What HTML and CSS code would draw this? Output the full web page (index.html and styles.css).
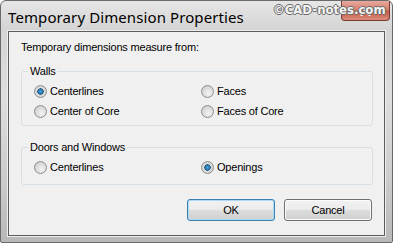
FILE: index.html
```html
<!DOCTYPE html>
<html lang="en">
<head>
    <meta charset="UTF-8">
    <title>Temporary Dimension Properties</title>
    <link rel="stylesheet" href="styles.css">
</head>
<body>
    <div class="window">
        <div class="titlebar">
            <span class="title">Temporary Dimension Properties</span>
            <span class="watermark">©CAD-notes.com</span>
            <span class="close">
                <svg width="11" height="10" viewBox="0 0 11 10">
                    <path d="M1.5 1 L9.5 9 M9.5 1 L1.5 9" stroke="#ffffff" stroke-width="2.2" stroke-linecap="round"/>
                </svg>
            </span>
        </div>

        <div class="client">
            <div class="intro">Temporary dimensions measure from:</div>

            <!-- Walls -->
            <fieldset class="group group-walls">
                <legend>Walls</legend>
                <div class="options">
                    <label class="option"><span class="radio checked"></span>Centerlines</label>
                    <label class="option"><span class="radio"></span>Faces</label>
                    <label class="option"><span class="radio"></span>Center of Core</label>
                    <label class="option"><span class="radio"></span>Faces of Core</label>
                </div>
            </fieldset>

            <!-- Doors and Windows -->
            <fieldset class="group group-doors">
                <legend>Doors and Windows</legend>
                <div class="options">
                    <label class="option"><span class="radio"></span>Centerlines</label>
                    <label class="option"><span class="radio checked"></span>Openings</label>
                </div>
            </fieldset>

            <div class="buttons">
                <button class="btn default">OK</button>
                <button class="btn">Cancel</button>
            </div>
        </div>
    </div>
</body>
</html>
```

FILE: styles.css
```css
html, body {
    margin: 0;
    padding: 0;
    background: #ffffff;
}

body {
    width: 393px;
    height: 243px;
    overflow: hidden;
    font-family: "Noto Sans", "Open Sans", sans-serif;
    color: #000;
}

.window {
    box-sizing: border-box;
    width: 393px;
    height: 243px;
    padding: 0 7px 7px 7px;
    border: 1px solid #6a6a6a;
    border-radius: 6px 6px 2px 2px;
    background: linear-gradient(180deg, #e6e6e6 0%, #d4d4d4 12%, #dedede 40%, #cbcbcb 75%, #b8b8b8 100%);
}

.titlebar {
    position: relative;
    height: 30px;
    display: flex;
    align-items: center;
    justify-content: space-between;
}

.title {
    font-size: 15px;
    margin-top: 1px;
    color: #000;
    letter-spacing: 0.1px;
}

.watermark {
    position: absolute;
    left: 265px;
    top: 1px;
    white-space: nowrap;
    font-family: "DejaVu Sans Condensed", "DejaVu Sans", sans-serif;
    font-weight: bold;
    font-size: 13px;
    color: #f4f4f4;
    text-shadow: 1px 0 0 #6a6a6a, -1px 0 0 #6a6a6a, 0 1px 0 #6a6a6a, 0 -1px 0 #6a6a6a;
    z-index: 2;
}

.close {
    align-self: flex-start;
    width: 49px;
    height: 20px;
    margin-right: -5px;
    box-sizing: border-box;
    border: 1px solid #7a3b33;
    border-top: none;
    border-radius: 0 0 4px 4px;
    background: linear-gradient(180deg, #e7a99e 0%, #d7806f 45%, #c45a48 55%, #d98c7c 100%);
    display: flex;
    align-items: center;
    justify-content: center;
}

.client {
    box-sizing: border-box;
    height: 205px;
    border: 1px solid #5c5c5c;
    background: #f0f0f0;
    padding: 8px 11px 0 12px;
    font-family: "Liberation Sans", Arial, sans-serif;
    font-size: 11px;
    letter-spacing: -0.2px;
    box-shadow: 0 0 0 1px #eeeeee;
}

.intro {
    line-height: 15px;
    margin-bottom: 9px;
}

.group {
    margin: 0;
    padding: 0 0 0 12px;
    border: 1px solid #d5dfe5;
    border-radius: 3px;
}

.group legend {
    padding: 0 2px;
    margin-left: -6px;
    line-height: 15px;
}

.group-walls {
    padding-bottom: 4px;
}

.group-doors {
    margin-top: 14px;
    padding-bottom: 7px;
}

.options {
    display: grid;
    grid-template-columns: 167px 1fr;
    margin-top: 2px;
}

.option {
    display: flex;
    align-items: center;
    height: 20px;
    line-height: 15px;
    padding-top: 1px;
    box-sizing: border-box;
}

.radio {
    box-sizing: border-box;
    width: 13px;
    height: 13px;
    margin-right: 3px;
    border: 1px solid #8e8f8f;
    border-radius: 50%;
    background: radial-gradient(circle at 60% 65%, #f4f4f4 0%, #d8d8d8 60%, #c2c2c2 100%);
}

.radio.checked {
    background: radial-gradient(circle, #4ca6e0 0%, #1f6fa6 32%, #1c4d73 38%, #dedede 44%, #c6c6c6 100%);
}

.buttons {
    display: flex;
    justify-content: flex-end;
    gap: 9px;
    margin-top: 14px;
    padding-right: 1px;
}

.btn {
    width: 88px;
    height: 22px;
    padding: 0;
    font-family: inherit;
    font-size: 11px;
    letter-spacing: inherit;
    color: #000;
    border: 1px solid #707070;
    border-radius: 3px;
    background: linear-gradient(180deg, #f2f2f2 0%, #ebebeb 48%, #dddddd 52%, #cfcfcf 100%);
    box-shadow: inset 0 0 0 1px #fcfcfc;
}

.btn.default {
    border-color: #3c7fb1;
    box-shadow: inset 0 0 0 1px #a9dbf6;
}
```
